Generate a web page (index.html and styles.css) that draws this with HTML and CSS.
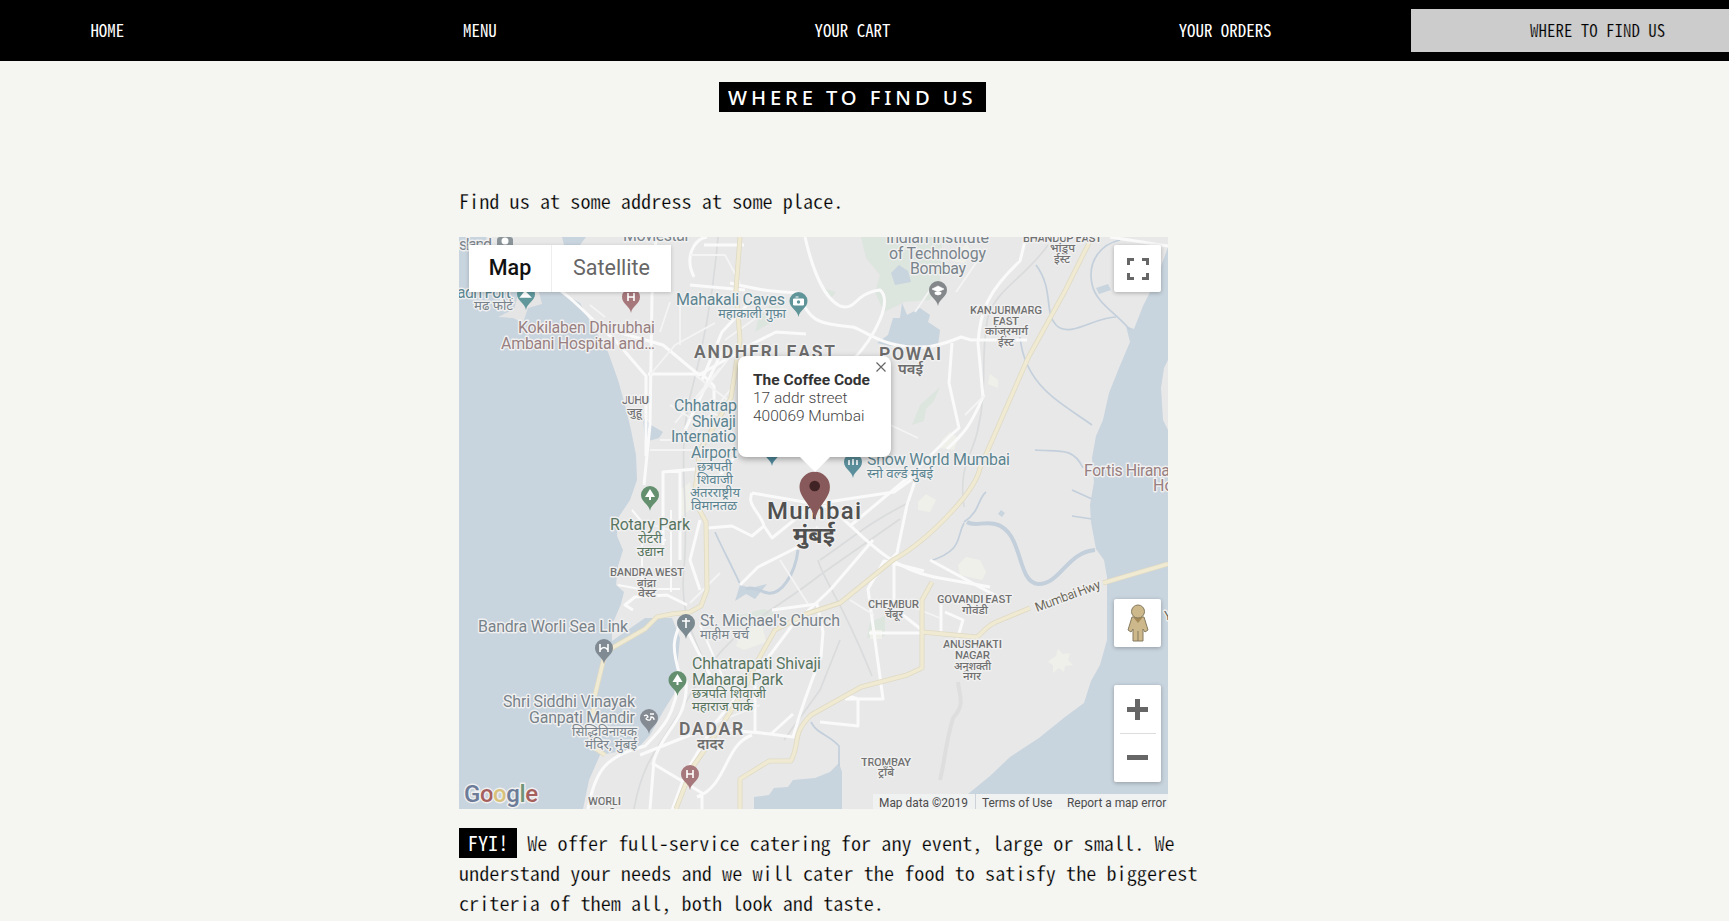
FILE: index.html
```html
<!DOCTYPE html>
<html lang="en">
<head>
<meta charset="utf-8">
<title>The Coffee Code</title>
<link rel="stylesheet" href="styles.css">
</head>
<body>
<nav class="nav">
  <a class="nav-item">HOME</a>
  <a class="nav-item">MENU</a>
  <a class="nav-item">YOUR CART</a>
  <a class="nav-item">YOUR ORDERS</a>
  <a class="nav-item active">WHERE TO FIND US</a>
</nav>
<main class="content">
  <h5 class="title"><span class="title-tag">WHERE TO FIND US</span></h5>
  <p class="lead">Find us at some address at some place.</p>
  <div class="map">
    <svg class="map-canvas" viewBox="459 237 709 572" width="709" height="572">
      <defs>
        <path id="pin" d="M0 14C-1 7-9 5-9-2a9 9 0 0 1 18 0C9 5 1 7 0 14Z"/>
      </defs>
      <rect x="459" y="237" width="709" height="572" fill="#e8e8e8"/>
      <!-- parks -->
      <g fill="#dde5df">
        <path d="M861 237H942L940 285 930 300 905 302 884 312 875 292 880 275 866 258Z"/>
        <path d="M755 332l20-12 6-14-8-4-14 14ZM912 425l8-20 20-18-6 14-8 8-2 12ZM870 622l15-6v20l-18 2ZM740 615l24-6 12 4-12 10-24 4ZM830 300l-8-12 14 4Z"/>
      </g>
      <g fill="#f0f0ea">
        <path d="M958 565l8-8 14 3 6 12-4 8-22-5ZM742 630l20-6 4 18-22 8-8-4ZM918 502l8-8 10 6-6 12-12-2ZM942 440l8-8 8 6-4 12-14-2ZM1050 660l6-4 2-7 5 5 7-1-2 7 5 5-8 1-1 6-5-4-6 5v-8l-5-3ZM870 630h12v9h-12ZM959 250l8-7 5 10-8 10-12-2ZM990 374l8 6v8l-10-4ZM960 600l14-4 2 12-16 2ZM680 490l10-8 3 25-12 10Z"/>
      </g>
      <!-- water -->
      <g fill="#c8d4de">
        <path d="M459 237H486L500 292H561L580 303 595 330 608 352 618 380 625 405 631 430 636 455 637 480 630 500 618 518 617 536 623 550 618 566 616 585 624 592 621 604 612 625 612 641 645 618 672 618 680 638 677 668 674 694 664 710 650 735 638 748 600 755 589 780 583 809H459Z"/>
        <path d="M562 237h24l-6 8h-16Z"/>
        <path d="M1168 247 1156 280 1143 306 1134 329 1126 326 1130 342 1119 368 1109 393 1103 420 1096 436 1092 458 1094 482 1090 505 1091 522 1096 549 1104 560 1107 577 1107 640 1100 665 1091 681 1084 703 1065 717 1039 738 1010 757 990 776 968 794H1168V430l-5-10-2-32 3-20 4-8Z"/>
        <path d="M754 809V797l15-2 5-7 14-1 5-7 22-2 15-6 9-9 3 9V809Z"/>
        <path d="M877 343 888 335 893 318 900 318 902 303 907 315 920 308 930 315 928 322 940 330 938 345 890 346Z"/>
        <path d="M891 273l8-8 9 6 3 11-16 3ZM643 417l8 8 12 7-4 6-14 4Z"/>
        <path d="M1096 288l12-4 3 6-12 4ZM1001 510l4 3-3 4-4-3ZM740 585l11 3 16-4-12 15-9-5-11 7Z"/>
      </g>
      <path d="M498 317l16-8 5-18 20 1 3 12-14 4-5 15-10-5Z" fill="#e5e5e5"/>
      <g class="stream">
        <path d="M1095 550c-28 2-35 35-57 34-22-2-14-53-43-60-12-3-20 3-28-2" stroke-width="4"/>
        <path d="M964 523c-8 14 0 27-34 38M964 522c16-10 14-24 22-30M1092 284c-5-24 10-40 28-44M1092 284c4 20 26 30 38 46M1116 317c-22 0-46 22-60 8-12-12-2-36-20-60M1035 450c22 2 38-4 48 18M1020 337c5 48 38 64 72 88M1072 490l20 9M1072 516l20 3" stroke-width="1.7"/>
        <path d="M798 550c-3 25-17 45-30 43-10-2-15-7-22-4" stroke-width="3"/>
        <path d="M715 532c8 18 15 30 26 54M811 722c6 12 17 12 28 24v20" stroke-width="1.7"/>
      </g>
      <!-- terrain and railway lines -->
      <g class="rail">
        <path d="M718 237c-4 50-12 100-28 160-14 60 0 110-6 170s20 80 28 120M1048 245c-22 32-52 44-60 72-8 34 0 70-10 112-5 26-20 36-14 78M820 560c30-20 46-36 90-58M820 575l80-56M820 575c-50 40-90 50-130 120-28 50-46 60-56 114M818 560c5 20 22 36 54 116M840 640l-20 50-36 50" stroke-width="1.7"/>
        <path d="M958 682c1 13 8 22-5 36-8 28-8 42-13 62" stroke="#dedede" stroke-width="4"/>
      </g>
      <!-- streets -->
      <g class="street">
        <path d="M541 278c30 16 50 42 74 62l31 36v80"/>
        <path d="M656 237l-4 58-2 130-6 60M694 277c-10-20 0-38 13-40M704 245h40M690 285l55 5M614 331l49 14 36 30 55-32 22-11 30 2"/>
        <path d="M805 237c8 35 20 62 35 69 18 5 12-12 40-16 12 10-2 44-29 72M730 283c34 8 40 8 68 10 12 30 20 30 55 34 16 6 22 14 44 18 25 6 45 0 64-8l10 3h56"/>
        <path d="M1026 237l-6 24c-32 30-40 50-42 82l3 32 2 22c-12 27-18 36-36 52M952 343l-3 40 10 45-9 8-40 40-60 50M917 475l-10 30-10 48-22 24"/>
        <path d="M1110 237l58 9M648 374h54l12 12v20l-22 2M702 380l20-48 26-28M720 475c20-20 22-35 30-48M725 345l-40 85"/>
        <path d="M663 545v-73l32-3M680 470v90M752 493c-6 12 9 20 12 33l-12 10-20-10-24 2M764 526l8 12 42-34 80-12 28-20M752 493l70 12c26 8 52 60 112 72l56 10M873 540l-42 49-40 38-30 40-45 55-30 50-20 55"/>
        <path d="M633 610l-8-5 10-8 32-2 20 10M700 520l-10 40 10 30M740 585l18-18 40-20 20-20M683 618c-10 20-12 28-3 58-6 40-15 50-35 70-40 10-50 25-57 63M686 680c3 40-22 48-32 80l-4 49M681 618l38 75M727 730l44 4 22-20M755 680v52l38 5c10-35 18-55 28-80l2-25-6-28-45 6"/>
        <path d="M820 722l38 4v-27l-13-4M845 699h38l-15-110 16-28 40 10M869 633h55M894 560v48l28 22M941 600v34M945 612l18 8-6 20M930 560l70 38M752 735c-28 10-24 50-55 62M652 763l50 30v16M640 755l50-20"/>
        <path d="M618 585l22 4h40M632 510l10 12v60M671 510v82M641 540h25M700 625l24 55" stroke-width="2"/>
      </g>
      <g class="street minor">
        <path d="M650 375l25-30 40-22M660 332l10-30M680 345v-40h42M735 350l-38 50M670 405l35 22M660 440h30l40-50M650 450h62M687 400l40 20M720 368l-45 55M695 375l42 32M636 520l34 10M720 573l-30 30M705 690h40l18-30M710 725l50-20M780 560l28 44M850 600l24 15M930 290l-15 22M978 260l-22 32M985 395l-20 20M880 420l38 18M895 600l45 18M760 315l-35 25M690 255h35l15 28M590 305l15 12M660 270h-50"/>
      </g>
      <!-- highways -->
      <g class="highway-edge">
        <path id="hw" d="M740 237 736 290 740 340 731 398 700 450 694 500 706 522 707 590 701 606 690 612 672 614 657 617 645 629 612 648 604 658 595 695 590 745 605 755M1092 237 1065 291 1028 358 980 468C975 493 926 542 893 560L840 603 806 614 775 630 758 660 744 690 722 725 692 768 676 809M740 809V779L769 761H791C801 741 791 735 811 715L861 687 907 675 922 668V600L932 582M922 632 976 637C981 636 983 628 996 622L1030 608M1103 583 1168 564"/>
      </g>
      <g class="highway"><use href="#hw"/></g>
      <!-- place pins -->
      <g class="pins">
        <g transform="translate(505 243)"><rect x="-8" y="-6" width="16" height="14" rx="3" fill="#8b9499" stroke="none"/><circle r="3.500" cy="-2" fill="#fff" stroke="none"/></g>
        <g transform="translate(526 296)"><use href="#pin" fill="#5f979b"/><path d="M-5 1l4-5 5 5Z" fill="#fff"/></g>
        <g transform="translate(631 299)"><use href="#pin" fill="#a6777b"/><path d="M-3-6V2M3-6V2M-3-2H3"/></g>
        <g transform="translate(798.500 303)"><use href="#pin" fill="#5f9599"/><path d="M-5-4H5V2H-5ZM-3-6H0" fill="#fff" stroke-width="1"/><circle r="1.700" cy="-1" fill="#5f9599" stroke="none"/></g>
        <g transform="translate(938 292)"><use href="#pin" fill="#85888b"/><path d="M-6-3l6-3 6 3-6 3Z M-3 0v2q3 2 6 0V0" fill="#fff" stroke-width=".6"/></g>
        <g transform="translate(772 452)"><use href="#pin" fill="#4e879a"/></g>
        <g transform="translate(853 464)"><use href="#pin" fill="#5b8f9b"/><path d="M-4-4v5M0-5v6M4-4v5"/></g>
        <g transform="translate(650 497)"><use href="#pin" fill="#649070"/><path d="M0-8l-5 8h4v3h2V0h4Z" fill="#fff" stroke="none"/></g>
        <g transform="translate(604 650)"><use href="#pin" fill="#7f8a92"/><path d="M-4-6V2M4-6V2M-4 0Q0-5 4 0"/></g>
        <g transform="translate(686 625)"><use href="#pin" fill="#7b8990"/><path d="M0-7V3M-4-4H4"/></g>
        <g transform="translate(677.500 682)"><use href="#pin" fill="#649070"/><path d="M0-8l-5 8h4v3h2V0h4Z" fill="#fff" stroke="none"/></g>
        <g transform="translate(649 720)"><use href="#pin" fill="#858b92"/><path d="M-5-4q3-2 4 1-4 2 0 3 3 1 3-3 3 0 3 3M1-6h4" stroke-width="1.300"/></g>
        <g transform="translate(690 776)"><use href="#pin" fill="#a6777b"/><path d="M-3-6V2M3-6V2M-3-2H3"/></g>
      </g>
      <!-- place names -->
      <g class="label gray">
        <text x="459" y="250" textLength="33">sland</text>
        <text x="623" y="241" textLength="67">Moviestar</text>
        <text x="886" y="243" textLength="103">Indian Institute</text>
        <text x="889" y="258.500" textLength="97">of Technology</text>
        <text x="910" y="274" textLength="56">Bombay</text>
        <text x="478" y="632" textLength="150">Bandra Worli Sea Link</text>
        <text x="503" y="707" textLength="132">Shri Siddhi Vinayak</text>
        <text x="529" y="723" textLength="106">Ganpati Mandir</text>
        <text x="700" y="626" textLength="140">St. Michael's Church</text>
        <g class="hi">
          <text x="572" y="736" textLength="65" lengthAdjust="spacingAndGlyphs">सिद्धिविनायक</text>
          <text x="585" y="749" textLength="52" lengthAdjust="spacingAndGlyphs">मंदिर, मुंबई</text>
          <text x="700" y="639" textLength="49" lengthAdjust="spacingAndGlyphs">माहीम चर्च</text>
          <text x="474" y="310" textLength="39" lengthAdjust="spacingAndGlyphs">मढ फोर्ट</text>
        </g>
      </g>
      <g class="label rose">
        <text x="518" y="333" textLength="137">Kokilaben Dhirubhai</text>
        <text x="501" y="348.500" textLength="154">Ambani Hospital and…</text>
        <text x="1084" y="476" textLength="86">Fortis Hirana</text>
        <text x="1153" y="491">Ho</text>
      </g>
      <g class="label teal">
        <text x="457" y="298" textLength="54">adh Fort</text>
        <text x="676" y="305" textLength="109">Mahakali Caves</text>
        <text x="674" y="411" textLength="63">Chhatrap</text>
        <text x="692" y="427" textLength="44">Shivaji</text>
        <text x="671" y="442" textLength="65">Internatio</text>
        <text x="691" y="458" textLength="46">Airport</text>
        <text x="867" y="465" textLength="143">Snow World Mumbai</text>
        <g class="hi">
          <text x="718" y="318" textLength="68" lengthAdjust="spacingAndGlyphs">महाकाली गुफ़ा</text>
          <text x="697" y="471" textLength="35" lengthAdjust="spacingAndGlyphs">छत्रपती</text>
          <text x="697" y="484" textLength="36" lengthAdjust="spacingAndGlyphs">शिवाजी</text>
          <text x="690" y="497" textLength="50" lengthAdjust="spacingAndGlyphs">अंतरराष्ट्रीय</text>
          <text x="691" y="510" textLength="46" lengthAdjust="spacingAndGlyphs">विमानतळ</text>
          <text x="867" y="478" textLength="66" lengthAdjust="spacingAndGlyphs">स्नो वर्ल्ड मुंबई</text>
        </g>
      </g>
      <g class="label green">
        <text x="610" y="530" textLength="80">Rotary Park</text>
        <text x="692" y="669" textLength="129">Chhatrapati Shivaji</text>
        <text x="692" y="685" textLength="91">Maharaj Park</text>
        <g class="hi">
          <text x="638" y="543" textLength="24" lengthAdjust="spacingAndGlyphs">रोटरी</text>
          <text x="637" y="556" textLength="27" lengthAdjust="spacingAndGlyphs">उद्यान</text>
          <text x="692" y="698" textLength="74" lengthAdjust="spacingAndGlyphs">छत्रपति शिवाजी</text>
          <text x="692" y="711" textLength="61" lengthAdjust="spacingAndGlyphs">महाराज पार्क</text>
        </g>
      </g>
      <g class="label area">
        <text x="622" y="404" textLength="27">JUHU</text>
        <text x="1023" y="241.500" textLength="79">BHANDUP EAST</text>
        <text x="970" y="314" textLength="72">KANJURMARG</text>
        <text x="993" y="324.500" textLength="26">EAST</text>
        <text x="610" y="576" textLength="74">BANDRA WEST</text>
        <text x="588" y="805" textLength="33">WORLI</text>
        <text x="868" y="608" textLength="51">CHEMBUR</text>
        <text x="937" y="603" textLength="75">GOVANDI EAST</text>
        <text x="943" y="648" textLength="59">ANUSHAKTI</text>
        <text x="955" y="658.500" textLength="35">NAGAR</text>
        <text x="861" y="765.500" textLength="50">TROMBAY</text>
        <text x="627" y="416" textLength="15" lengthAdjust="spacingAndGlyphs">जुहू</text>
        <text x="1050" y="252" textLength="25" lengthAdjust="spacingAndGlyphs">भांडुप</text>
        <text x="1054" y="263" textLength="16" lengthAdjust="spacingAndGlyphs">ईस्ट</text>
        <text x="985" y="335" textLength="43" lengthAdjust="spacingAndGlyphs">कांजुरमार्ग</text>
        <text x="998" y="346" textLength="16" lengthAdjust="spacingAndGlyphs">ईस्ट</text>
        <text x="637" y="587" textLength="19" lengthAdjust="spacingAndGlyphs">बांद्रा</text>
        <text x="638" y="597" textLength="18" lengthAdjust="spacingAndGlyphs">वेस्ट</text>
        <text x="592" y="818" textLength="25" lengthAdjust="spacingAndGlyphs">वरळी</text>
        <text x="885" y="618" textLength="18" lengthAdjust="spacingAndGlyphs">चेंबूर</text>
        <text x="962" y="614" textLength="26" lengthAdjust="spacingAndGlyphs">गोवंडी</text>
        <text x="954" y="670" textLength="37" lengthAdjust="spacingAndGlyphs">अनुशक्ती</text>
        <text x="963" y="680" textLength="18" lengthAdjust="spacingAndGlyphs">नगर</text>
        <text x="878" y="776" textLength="16" lengthAdjust="spacingAndGlyphs">ट्रॉंबे</text>
      </g>
      <g class="label district">
        <text x="694" y="358" textLength="141">ANDHERI EAST</text>
        <text x="879" y="360" textLength="62">POWAI</text>
        <text x="679" y="735" textLength="64">DADAR</text>
        <g class="hi">
          <text x="898" y="374" textLength="25" lengthAdjust="spacingAndGlyphs">पवई</text>
          <text x="697" y="749" textLength="27" lengthAdjust="spacingAndGlyphs">दादर</text>
        </g>
      </g>
      <g class="label city">
        <text x="767" y="518.500" textLength="94">Mumbai</text>
        <text class="city-hi" x="793" y="543" textLength="42" lengthAdjust="spacingAndGlyphs">मुंबई</text>
      </g>
      <text class="label road" transform="translate(1037 612) rotate(-20.500)" textLength="69">Mumbai Hwy</text>
      <text class="label road" x="1164" y="620">Y</text>
      <text class="label google" x="464" y="802" textLength="74"><tspan fill="#6c7c98">G</tspan><tspan fill="#a5605e">o</tspan><tspan fill="#d8c27b">o</tspan><tspan fill="#6c7c98">g</tspan><tspan fill="#6f9478">l</tspan><tspan fill="#a5605e">e</tspan></text>
      <!-- shop marker -->
      <path d="M815 521C813 505 799.500 499 799.500 487a15.200 15.200 0 0 1 30.400 0C830 499 817 505 815 521Z" fill="#88595a"/>
      <circle cx="814.700" cy="486" r="5.300" fill="#402324"/>
    </svg>
    <div class="map-type"><span class="type on">Map</span><span class="type">Satellite</span></div>
    <div class="info">
      <strong>The Coffee Code</strong><span>17 addr street</span><span>400069 Mumbai</span>
      <svg class="info-close" viewBox="0 0 10 10"><path d="M.5.5l9 9M9.500.5l-9 9"/></svg>
    </div>
    <div class="ctl full"><svg width="22" height="22" viewBox="0 0 22 22"><path d="M1.500 7V1.500H7M15 1.500h5.500V7M20.500 15v5.500H15M7 20.500H1.500V15" fill="none" stroke="#666" stroke-width="3"/></svg></div>
    <div class="ctl street-view"><svg width="22" height="38" viewBox="0 0 22 38"><g fill="#ccb88a" stroke="#857a5f"><path d="M5 13h12l4 13-3 2-2-3v12H6V25l-2 3-3-2Z"/><path d="M6 13h10l-5 6Z" fill="#a58a57" stroke="none"/><path d="M11 27v10"/><circle cx="11" cy="7.500" r="6.500"/></g></svg></div>
    <div class="ctl zoom"><span class="plus"></span><span class="rule"></span><span class="minus"></span></div>
    <div class="credits"><span class="c1">Map data ©2019</span><span class="c2">Terms of Use</span><span class="c3">Report a map error</span></div>
  </div>
  <p class="fyi"><span class="tag">FYI!</span> We offer full-service catering for any event, large or small. We understand your needs and we will cater the food to satisfy the biggerest criteria of them all, both look and taste.</p>
</main>
</body>
</html>
```

FILE: styles.css
```css
* { box-sizing: border-box; }
body {
  margin: 0;
  height: 921px;
  overflow: hidden;
  background: #f5f5f1;
  color: #000;
  font-family: "Noto Sans Mono CJK JP", "Noto Sans Mono CJK SC", "Liberation Mono", monospace;
  font-size: 20.24px;
  line-height: 30px;
}
.nav {
  display: grid;
  grid-template-columns: repeat(5, 372.6px);
  height: 61px;
  padding: 9px 0;
  margin-left: -79px;
  width: 1863px;
  background: #000;
  color: #fff;
  font-size: 16.9px;
}
.nav-item { height: 43px; line-height: 41px; text-align: center; }
.nav-item.active { background: #ccc; color: #000; -webkit-text-stroke: 0.22px #ccc; }
.content { width: 787px; margin-left: 459px; }
.title {
  display: flex;
  margin: 21px 0 0;
  padding-left: 260px;
  height: 30px;
  font: 500 20.2px/30px "Noto Sans", sans-serif;
}
.title-tag {
  width: 267px;
  background: #000;
  color: #fff;
  padding-left: 9px;
  white-space: nowrap;
  letter-spacing: 3.9px;
}
.lead { margin: 74px 0 0; height: 30px; }
.lead, .fyi { -webkit-text-stroke: 0.25px #f5f5f1; }
.map {
  position: relative;
  width: 709px;
  height: 572px;
  margin-top: 21px;
  overflow: hidden;
  font-family: Roboto, "Noto Sans", sans-serif;
  -webkit-text-stroke: 0;
}
.map-canvas { display: block; }
.stream { fill: none; stroke: #c3cfdb; }
.rail { fill: none; stroke: #dadbdc; }
.street { fill: none; stroke: #fafafa; stroke-width: 3; stroke-linejoin: round; }
.street.minor { stroke: #f4f4f4; stroke-width: 1.8; }
.highway-edge { fill: none; stroke: #dfdac5; stroke-width: 5; stroke-linejoin: round; }
.highway { fill: none; stroke: #f0ead2; stroke-width: 3.4; stroke-linejoin: round; }
.pins { fill: none; stroke: #fff; stroke-width: 1.6; }
.pins use { stroke: none; }
.label {
  font-family: Roboto, "Noto Sans", sans-serif;
  font-size: 16px;
  paint-order: stroke;
  stroke: #f0f0f0;
  stroke-width: 2.8px;
  stroke-linejoin: round;
}
.hi { font-size: 13px; }
.gray { fill: #78828a; }
.rose { fill: #987f81; }
.teal { fill: #5b8490; }
.green { fill: #587560; }
.area { fill: #707070; font-size: 11.5px; font-weight: 500; }
.district { fill: #6c6c6c; font-size: 17.5px; font-weight: 600; }
.district .hi { font-size: 14px; }
.city { fill: #505050; font-size: 24px; font-weight: 500; }
.city-hi { font-size: 23px; font-weight: 700; }
.road { fill: #6b6759; font-size: 13px; }
.google { font-size: 24px; font-weight: 500; }
.map-type {
  position: absolute;
  left: 10px;
  top: 8px;
  display: flex;
  height: 47px;
  background: #fff;
  box-shadow: 0 1px 4px #0003;
  font-size: 21.5px;
  line-height: 46px;
}
.type { width: 119px; text-align: center; color: #666; }
.type.on { width: 83px; color: #111; font-weight: 500; border-right: 1px solid #eee; }
.info {
  position: absolute;
  left: 279px;
  top: 119px;
  width: 153px;
  height: 101px;
  padding: 15px 0 0 15px;
  display: flex;
  flex-direction: column;
  border-radius: 8px;
  background: #fff;
  box-shadow: 0 2px 6px #0005;
  color: #444;
  font-size: 15.5px;
  font-weight: 300;
  line-height: 18px;
  white-space: nowrap;
}
.info strong { font-weight: 700; font-size: 15.5px; color: #333; }
.info::after {
  content: "";
  position: absolute;
  left: 61px;
  top: 100px;
  border: 16px solid transparent;
  border-top: 16px solid #fff;
  border-bottom: 0;
}
.info-close { position: absolute; right: 5px; top: 6px; width: 10px; height: 10px; stroke: #666; stroke-width: 1.2; }
.ctl {
  position: absolute;
  right: 7px;
  width: 47px;
  height: 48px;
  display: flex;
  align-items: center;
  justify-content: center;
  background: #fff;
  border-radius: 2px;
  box-shadow: 0 1px 4px #0004;
}
.full { top: 8px; height: 47px; }
.street-view { top: 362px; }
.zoom { top: 448px; height: 97px; flex-direction: column; justify-content: flex-start; padding-top: 14px; }
.plus { width: 21px; height: 21px; background: linear-gradient(#666, #666) center / 21px 5px no-repeat, linear-gradient(#666, #666) center / 5px 21px no-repeat; }
.rule { width: 36px; height: 1px; background: #ddd; margin: 13px 0 21px; }
.minus { width: 21px; height: 5px; background: #666; }
.credits {
  position: absolute;
  left: 414px;
  right: 0;
  bottom: 0;
  height: 15px;
  display: flex;
  background: #f1f2f3cc;
  color: #4c4c4c;
  font-size: 11.9px;
  line-height: 18px;
  white-space: nowrap;
}
.c1 { width: 103px; padding-left: 6px; border-right: 1px solid #ccd2d7; }
.c2 { width: 91px; padding-left: 6px; }
.fyi { margin: 19px 0 0; padding-right: 45px; }
.tag {
  padding: 0 8.8px;
  background: linear-gradient(#000, #000) 0 100% / 100% 100% no-repeat;
  box-shadow: 0 1px #000;
  color: #fff;
  -webkit-text-stroke: 0;
}
```
